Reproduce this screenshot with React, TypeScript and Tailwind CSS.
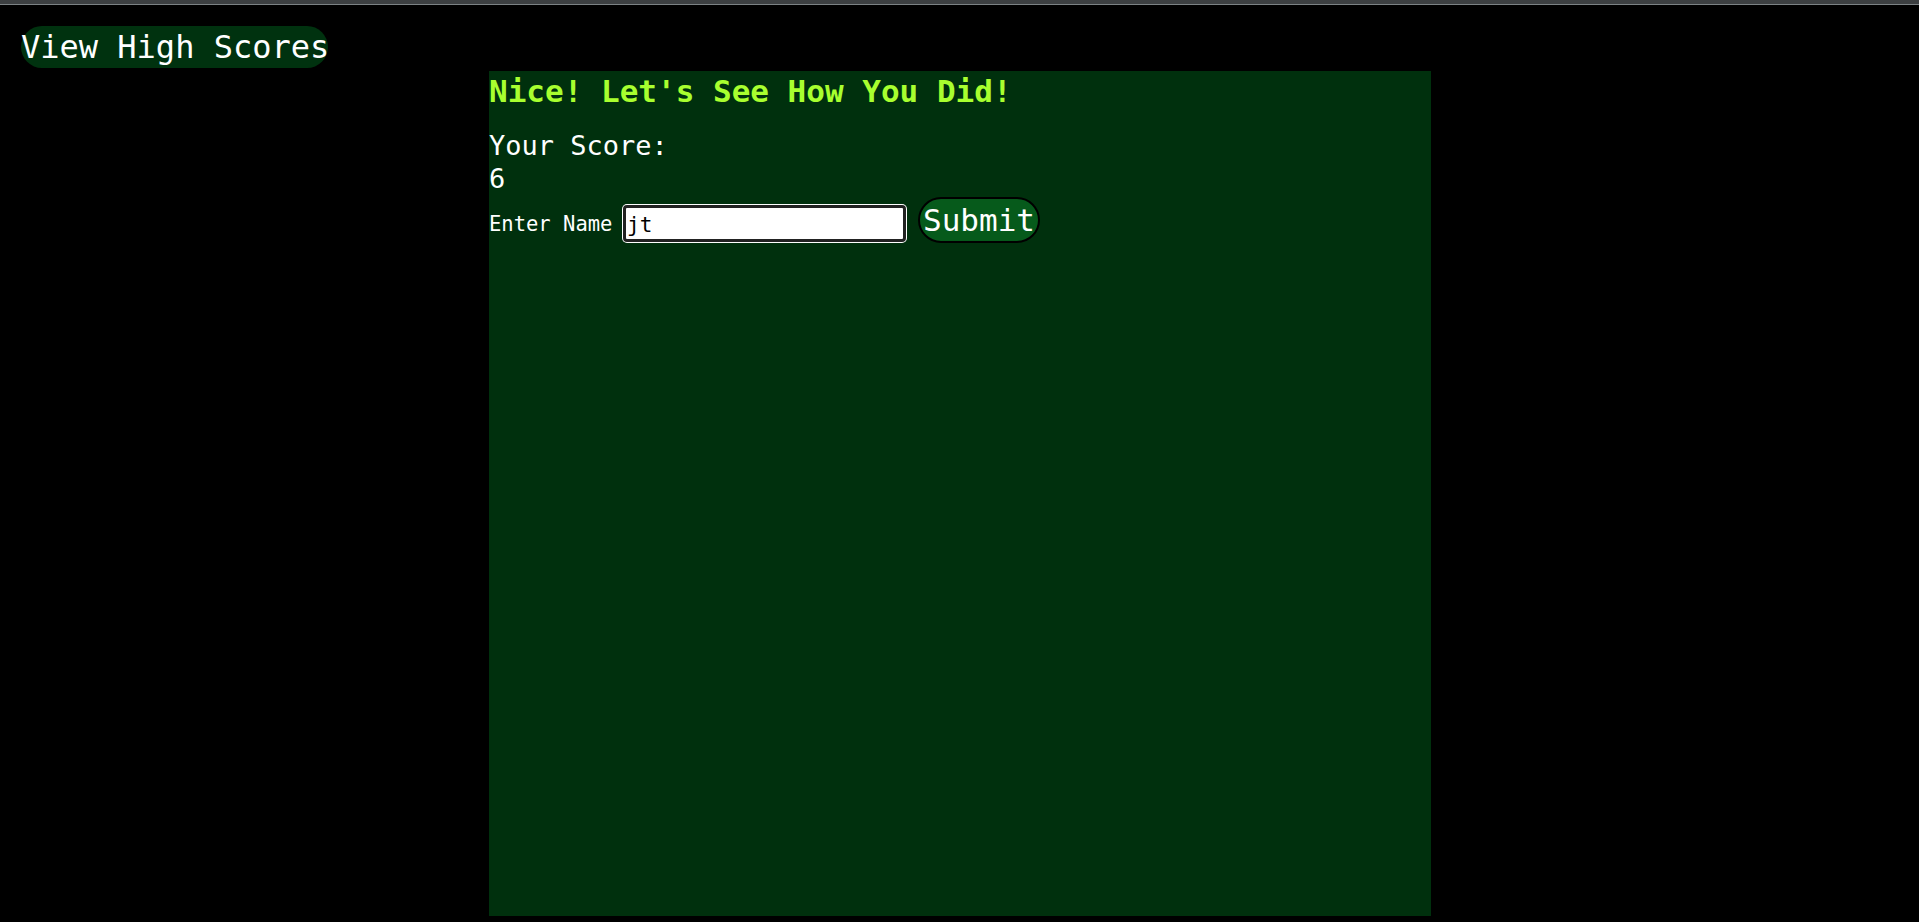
import React from "react";

const mono = { fontFamily: '"DejaVu Sans Mono", "Liberation Mono", monospace' };

function HighScoresButton() {
  return (
    <button
      type="button"
      className="ml-[21px] mt-[21px] h-[42px] w-[307px] rounded-full bg-[#00320f] p-0 text-left text-[32px] leading-[42px] whitespace-nowrap text-white"
      style={mono}
    >
      View High Scores
    </button>
  );
}

function ScoreForm() {
  return (
    <div className="mt-[2px] flex items-start">
      <label className="mt-[15px] w-[134px] text-[20.5px] leading-[24px] text-white whitespace-nowrap">
        Enter Name
      </label>
      <input
        type="text"
        defaultValue="jt"
        className="mt-[8px] h-[37px] w-[283px] rounded-[4px] border-[3px] border-[#222] bg-white pl-[1px] pt-[3px] pb-0 text-[21px] text-black shadow-[0_0_0_1px_#ffffff] outline-none"
        style={mono}
      />
      <button
        type="button"
        className="ml-[12px] flex h-[46px] w-[122px] items-center justify-center rounded-full border-2 border-black bg-[#065a1b] p-0 text-[31px] leading-[42px] text-white"
        style={mono}
      >
        Submit
      </button>
    </div>
  );
}

export default function App() {
  return (
    <div className="min-h-[922px] w-full bg-black" style={mono}>
      <div className="h-[4px] w-full bg-[#3c3f41]" />
      <div className="h-[1px] w-full bg-[#7c8285]" />
      <HighScoresButton />
      <section className="ml-[489px] mt-[3px] h-[845px] w-[942px] bg-[#00300d] pt-[2px]">
        <h2 className="text-[31px] font-bold leading-[36px] text-[#a8ff2f]">
          Nice! Let's See How You Did!
        </h2>
        <p className="mt-[20px] text-[27px] leading-[33px] text-white">Your Score:</p>
        <p className="text-[27px] leading-[33px] text-white">6</p>
        <ScoreForm />
      </section>
    </div>
  );
}
